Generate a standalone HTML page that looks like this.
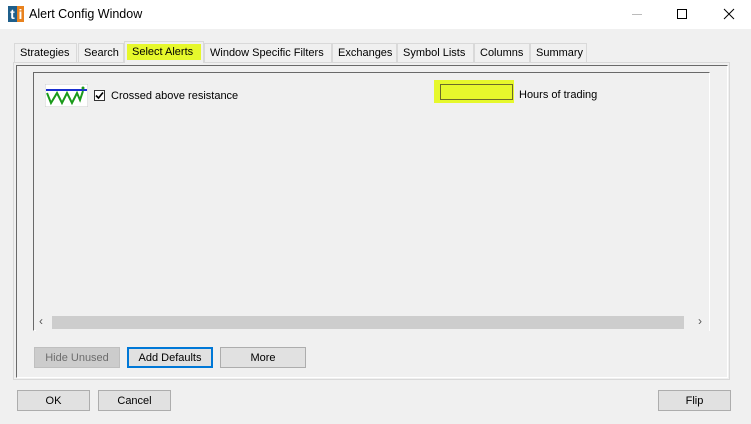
<!DOCTYPE html>
<html><head><style>
*{box-sizing:border-box}
body{margin:0;width:751px;height:424px;background:#f0f0f0;font-family:"Liberation Sans",sans-serif;font-size:11px;color:#000;position:relative;overflow:hidden}
.a{position:absolute}
.btn{position:absolute;background:#e1e1e1;border:1px solid #adadad;text-align:center;line-height:20px;font-size:11px}
.tab{position:absolute;top:43px;height:19px;border:1px solid #d9d9d9;border-bottom:none;line-height:19px;padding:0 5px;background:#f0f0f0}
</style></head><body>
<div class="a" style="left:0;top:0;width:751px;height:29px;background:#fff"></div>
<div class="a" style="left:8px;top:6px;width:9px;height:16px;background:#1f5f8b;color:#fff;font-weight:bold;font-size:14px;line-height:16px;text-align:center">t</div>
<div class="a" style="left:17px;top:6px;width:7px;height:16px;background:#e8821e;color:#fff;font-weight:bold;font-size:14px;line-height:16px;text-align:center">i</div>
<div class="a" style="left:29px;top:7px;font-size:12.5px">Alert Config Window</div>
<div class="a" style="left:632px;top:14px;width:10px;height:1px;background:#bbb"></div>
<div class="a" style="left:677px;top:9px;width:10px;height:10px;border:1px solid #000"></div>
<svg class="a" style="left:723px;top:8px" width="12" height="12"><path d="M1 1L11 11M11 1L1 11" stroke="#000" stroke-width="1"/></svg>

<div class="a" style="left:13px;top:62px;width:717px;height:318px;border:1px solid #d9d9d9;background:#f0f0f0"></div>
<div class="a" style="left:16px;top:65px;width:712px;height:313px;border-left:1px solid #696969;border-top:1px solid #696969;border-right:1px solid #fff;border-bottom:1px solid #fff"></div>
<div class="tab" style="left:14px;width:63px">Strategies</div>
<div class="tab" style="left:78px;width:46px">Search</div>
<div class="tab" style="left:124px;top:41px;height:22px;width:80px;background:#f0f0f0;padding:2px 2px 0">
 <div style="background:#e6f82c;padding:0 5px;line-height:16px">Select Alerts</div></div>
<div class="tab" style="left:204px;width:128px">Window Specific Filters</div>
<div class="tab" style="left:332px;width:65px">Exchanges</div>
<div class="tab" style="left:397px;width:77px">Symbol Lists</div>
<div class="tab" style="left:474px;width:56px">Columns</div>
<div class="tab" style="left:530px;width:57px">Summary</div>

<div class="a" style="left:33px;top:72px;width:677px;height:259px;border-left:1px solid #696969;border-top:1px solid #696969;border-right:1px solid #fff;border-bottom:1px solid #fff"></div>
<svg class="a" style="left:45px;top:84px" width="43" height="23"><rect x="0" y="0" width="43" height="23" fill="#fff" stroke="#ccc"/><line x1="1" y1="6" x2="42" y2="6" stroke="#1a2fd0" stroke-width="2"/><polyline points="2,9 6,19 12,9 17,19 22,9 27,19 32,9 35,16 38,7" fill="none" stroke="#1a9a1a" stroke-width="2"/><circle cx="38" cy="4" r="1.5" fill="#1a9a1a"/></svg>
<div class="a" style="left:94px;top:90px;width:11px;height:11px;border:1px solid #333;background:#fff"></div>
<svg class="a" style="left:95px;top:91px" width="9" height="9"><path d="M1 4.5L3.5 7L8 1.5" fill="none" stroke="#000" stroke-width="1.6"/></svg>
<div class="a" style="left:111px;top:90px">Crossed above resistance</div>
<div class="a" style="left:434px;top:80px;width:80px;height:23px;background:#e6f82c"></div>
<div class="a" style="left:440px;top:84px;width:73px;height:16px;border:1px solid #6b6b2a;background:#e6f82c"></div>
<div class="a" style="left:519px;top:89px">Hours of trading</div>

<div class="a" style="left:36px;top:314px;width:673px;height:17px;background:#f0f0f0"></div>
<div class="a" style="left:52px;top:316px;width:632px;height:13px;background:#cdcdcd"></div>
<div class="a" style="left:39px;top:314px;color:#555;font-size:12px">‹</div>
<div class="a" style="left:698px;top:314px;color:#555;font-size:12px">›</div>

<div class="btn" style="left:34px;top:347px;width:86px;height:21px;background:#cccccc;border-color:#bfbfbf;color:#6d6d6d">Hide Unused</div>
<div class="btn" style="left:127px;top:347px;width:86px;height:21px;border:2px solid #0078d7;line-height:18px">Add Defaults</div>
<div class="btn" style="left:220px;top:347px;width:86px;height:21px">More</div>

<div class="btn" style="left:17px;top:390px;width:73px;height:21px">OK</div>
<div class="btn" style="left:98px;top:390px;width:73px;height:21px">Cancel</div>
<div class="btn" style="left:658px;top:390px;width:73px;height:21px">Flip</div>
</body></html>
